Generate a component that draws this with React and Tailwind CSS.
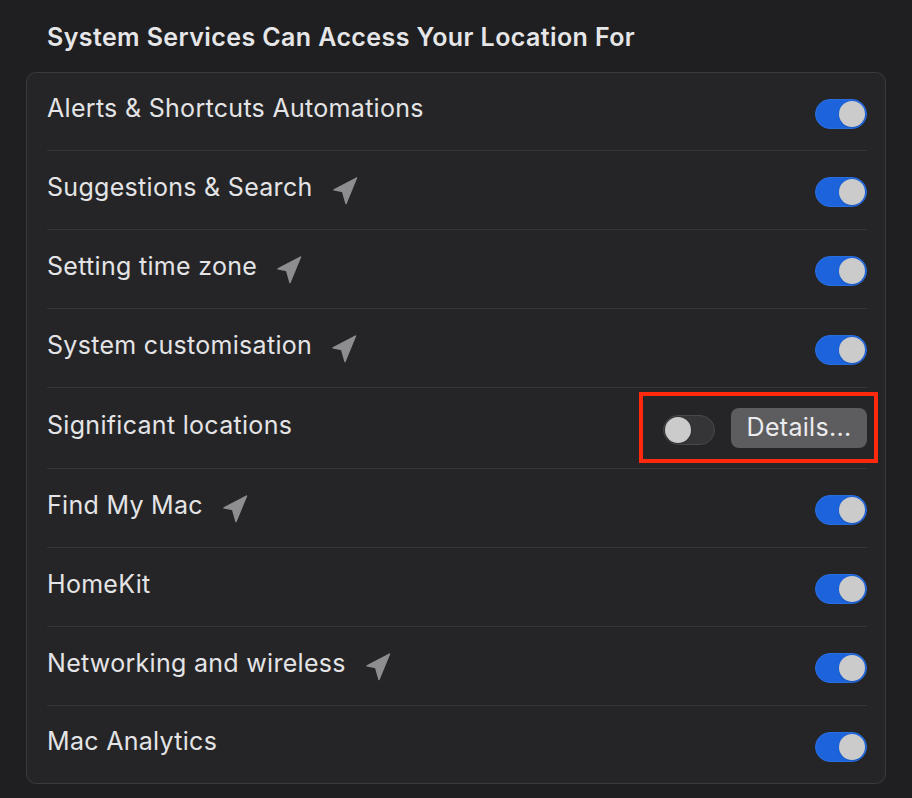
const rows = [
  { label: 'Alerts & Shortcuts Automations', on: true, h: 'h-[78px]' },
  { label: 'Suggestions & Search', on: true, arrow: true, h: 'h-[79px]' },
  { label: 'Setting time zone', on: true, arrow: true, h: 'h-[79px]' },
  { label: 'System customisation', on: true, arrow: true, h: 'h-[79px]' },
  { label: 'Significant locations', on: false, details: true, h: 'h-[81px]' },
  { label: 'Find My Mac', on: true, arrow: true, h: 'h-[79px]' },
  { label: 'HomeKit', on: true, h: 'h-[79px]' },
  { label: 'Networking and wireless', on: true, arrow: true, h: 'h-[79px]' },
  { label: 'Mac Analytics', on: true, h: 'h-[77px]' },
];

const LocationArrow = () => (
  <svg width="25" height="28" viewBox="0 0 25 28" className="ml-[20px] shrink-0 mt-[2px]">
    <path
      d="M23.5 1 L1 12.8 L9.6 14.6 L13 26.5 Z"
      fill="#8e8e90"
      stroke="#8e8e90"
      strokeWidth="1.4"
      strokeLinejoin="round"
    />
  </svg>
);

const Toggle = ({ on }) =>
  on ? (
    <div className="w-[52px] h-[30px] rounded-full bg-[#1d64dc] border border-[#2a6fe0] flex items-center justify-end pr-[1px]">
      <div className="w-[26px] h-[26px] rounded-full bg-[#cbcbcb] shadow-sm" />
    </div>
  ) : (
    <div className="w-[52px] h-[30px] rounded-full bg-[#353537] border border-[#48484a] flex items-center pl-[1px]">
      <div className="w-[26px] h-[26px] rounded-full bg-[#cbcbcb] shadow-sm" />
    </div>
  );

export default function App() {
  return (
    <div
      className="w-[912px] h-[798px] bg-[#1f1f21] px-[26px] pt-[20px] text-[#e4e4e6]"
      style={{ fontFamily: 'Inter, "Noto Sans", sans-serif' }}
    >
      <h2 className="pl-[21px] text-[25px] leading-[34px] font-semibold text-[#e6e6e8] tracking-[0.4px]">
        System Services Can Access Your Location For
      </h2>
      <div className="mt-[18px] bg-[#252527] border border-[#3a3a3c] rounded-[10px] pl-5 pr-[18px]">
        {rows.map((row, i) => (
          <div
            key={row.label}
            className={`relative ${row.h} flex items-center ${i < rows.length - 1 ? 'border-b border-[#353537]' : ''}`}
          >
            <span className="text-[25px] leading-none tracking-[0.3px] -mt-[6px]">{row.label}</span>
            {row.arrow && <LocationArrow />}
            <div className="ml-auto flex items-center gap-4 mt-[4px]">
              <Toggle on={row.on} />
              {row.details && (
                <div className="w-[136px] h-[40px] mb-[4px] rounded-[8px] bg-[#5d5d5f] flex items-center justify-center text-[25px] text-[#ececee] tracking-[0.3px]">
                  Details...
                </div>
              )}
            </div>
            {row.details && (
              <div className="absolute left-[592px] top-[4px] w-[239px] h-[71px] border-[4px] border-[#ff2a0e]" />
            )}
          </div>
        ))}
      </div>
    </div>
  );
}
